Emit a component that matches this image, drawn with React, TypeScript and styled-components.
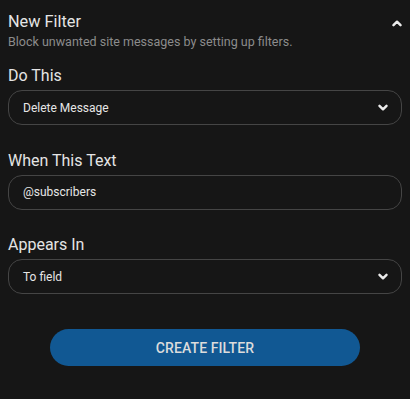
import React from 'react';
import styled, { createGlobalStyle } from 'styled-components';

const GlobalStyle = createGlobalStyle`
  html, body {
    margin: 0;
    padding: 0;
    background: #161616;
  }
  body {
    font-family: Roboto, "Noto Sans", "Liberation Sans", sans-serif;
    color: #e2e2e2;
  }
`;

const Panel = styled.div`
  display: flex;
  flex-direction: column;
  padding: 12px 8px 0 8px;
  width: 410px;
  box-sizing: border-box;
`;

const Header = styled.div`
  display: flex;
  justify-content: space-between;
  align-items: flex-start;
`;

const HeaderText = styled.div`
  display: flex;
  flex-direction: column;
  gap: 2px;
`;

const Title = styled.div`
  font-size: 16.3px;
  line-height: 20px;
  color: #e4e4e4;
`;

const Subtitle = styled.div`
  font-size: 12.5px;
  line-height: 16px;
  color: #8c8c8c;
`;

const CollapseButton = styled.button`
  display: flex;
  align-items: center;
  justify-content: center;
  padding: 0;
  margin: 8px 0 0 0;
  border: none;
  background: none;
  cursor: pointer;
`;

const Field = styled.div<{ $first?: boolean }>`
  display: flex;
  flex-direction: column;
  gap: 4px;
  margin-top: ${(p) => (p.$first ? '16px' : '25.5px')};
`;

const Label = styled.label`
  font-size: 16px;
  line-height: 20px;
  color: #e4e4e4;
`;

const Box = styled.div`
  display: flex;
  align-items: center;
  justify-content: space-between;
  height: 35px;
  box-sizing: border-box;
  padding: 0 13px 0 14px;
  border: 1px solid #454545;
  border-radius: 14px;
  background: #161616;
  font-size: 12px;
  color: #e6e6e6;
  cursor: pointer;
`;

const TextInput = styled.input`
  height: 35px;
  box-sizing: border-box;
  padding: 0 14px;
  border: 1px solid #454545;
  border-radius: 14px;
  background: #161616;
  font-family: inherit;
  font-size: 12px;
  color: #e6e6e6;
  outline: none;
`;

const SubmitButton = styled.button`
  align-self: center;
  width: 310px;
  height: 37px;
  margin-top: 35px;
  border: none;
  border-radius: 19px;
  background: #115893;
  color: #dcdcdc;
  font-family: inherit;
  font-size: 14px;
  font-weight: 500;
  letter-spacing: 0.1px;
  text-transform: uppercase;
  cursor: pointer;
`;

const Chevron: React.FC<{ up?: boolean }> = ({ up }) => (
  <svg width="10" height="7" viewBox="0 0 10 7">
    <polyline
      points={up ? '1.5,5.2 5,1.7 8.5,5.2' : '1.5,1.8 5,5.3 8.5,1.8'}
      fill="none"
      stroke="#ececec"
      strokeWidth="2.4"
      strokeLinecap="round"
      strokeLinejoin="round"
    />
  </svg>
);

const SelectBox: React.FC<{ value: string }> = ({ value }) => (
  <Box role="combobox">
    <span>{value}</span>
    <Chevron />
  </Box>
);

export default function App() {
  return (
    <>
      <GlobalStyle />
      <Panel>
        <Header>
          <HeaderText>
            <Title>New Filter</Title>
            <Subtitle>Block unwanted site messages by setting up filters.</Subtitle>
          </HeaderText>
          <CollapseButton aria-label="Collapse">
            <Chevron up />
          </CollapseButton>
        </Header>

        <Field $first>
          <Label>Do This</Label>
          <SelectBox value="Delete Message" />
        </Field>

        <Field>
          <Label>When This Text</Label>
          <TextInput defaultValue="@subscribers" />
        </Field>

        <Field>
          <Label>Appears In</Label>
          <SelectBox value="To field" />
        </Field>

        <SubmitButton>Create Filter</SubmitButton>
      </Panel>
    </>
  );
}
